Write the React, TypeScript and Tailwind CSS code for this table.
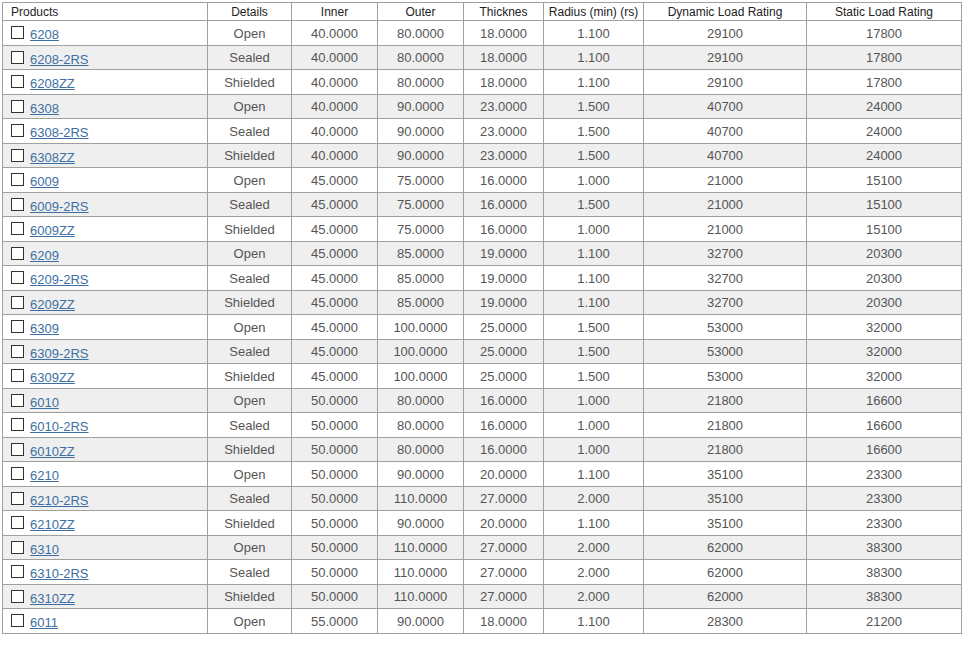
// Bearing spec table: products with checkbox + link, then dimensions and load ratings.

type Row = [string, string, string, string, string, string, string, string];

const rows: Row[] = [
  ["6208", "Open", "40.0000", "80.0000", "18.0000", "1.100", "29100", "17800"],
  ["6208-2RS", "Sealed", "40.0000", "80.0000", "18.0000", "1.100", "29100", "17800"],
  ["6208ZZ", "Shielded", "40.0000", "80.0000", "18.0000", "1.100", "29100", "17800"],
  ["6308", "Open", "40.0000", "90.0000", "23.0000", "1.500", "40700", "24000"],
  ["6308-2RS", "Sealed", "40.0000", "90.0000", "23.0000", "1.500", "40700", "24000"],
  ["6308ZZ", "Shielded", "40.0000", "90.0000", "23.0000", "1.500", "40700", "24000"],
  ["6009", "Open", "45.0000", "75.0000", "16.0000", "1.000", "21000", "15100"],
  ["6009-2RS", "Sealed", "45.0000", "75.0000", "16.0000", "1.500", "21000", "15100"],
  ["6009ZZ", "Shielded", "45.0000", "75.0000", "16.0000", "1.000", "21000", "15100"],
  ["6209", "Open", "45.0000", "85.0000", "19.0000", "1.100", "32700", "20300"],
  ["6209-2RS", "Sealed", "45.0000", "85.0000", "19.0000", "1.100", "32700", "20300"],
  ["6209ZZ", "Shielded", "45.0000", "85.0000", "19.0000", "1.100", "32700", "20300"],
  ["6309", "Open", "45.0000", "100.0000", "25.0000", "1.500", "53000", "32000"],
  ["6309-2RS", "Sealed", "45.0000", "100.0000", "25.0000", "1.500", "53000", "32000"],
  ["6309ZZ", "Shielded", "45.0000", "100.0000", "25.0000", "1.500", "53000", "32000"],
  ["6010", "Open", "50.0000", "80.0000", "16.0000", "1.000", "21800", "16600"],
  ["6010-2RS", "Sealed", "50.0000", "80.0000", "16.0000", "1.000", "21800", "16600"],
  ["6010ZZ", "Shielded", "50.0000", "80.0000", "16.0000", "1.000", "21800", "16600"],
  ["6210", "Open", "50.0000", "90.0000", "20.0000", "1.100", "35100", "23300"],
  ["6210-2RS", "Sealed", "50.0000", "110.0000", "27.0000", "2.000", "35100", "23300"],
  ["6210ZZ", "Shielded", "50.0000", "90.0000", "20.0000", "1.100", "35100", "23300"],
  ["6310", "Open", "50.0000", "110.0000", "27.0000", "2.000", "62000", "38300"],
  ["6310-2RS", "Sealed", "50.0000", "110.0000", "27.0000", "2.000", "62000", "38300"],
  ["6310ZZ", "Shielded", "50.0000", "110.0000", "27.0000", "2.000", "62000", "38300"],
  ["6011", "Open", "55.0000", "90.0000", "18.0000", "1.100", "28300", "21200"],
];

const headers = [
  "Products",
  "Details",
  "Inner",
  "Outer",
  "Thicknes",
  "Radius (min) (rs)",
  "Dynamic Load Rating",
  "Static Load Rating",
];

const widths = ["w-[205px]", "w-[84px]", "w-[86px]", "w-[86px]", "w-[80px]", "w-[100px]", "w-[163px]", "w-[155px]"];

export default function App() {
  return (
    <div className="min-h-[659px] bg-white pl-[2px] pt-[2px] font-['Liberation_Sans',Arial,sans-serif]">
      <table className="w-[960px] table-fixed border-collapse border border-[#a0a0a0]">
        <colgroup>
          {widths.map((w, i) => (
            <col key={i} className={w} />
          ))}
        </colgroup>
        <thead>
          <tr className="h-[18px]">
            {headers.map((h, i) => (
              <th
                key={h}
                className={`border border-[#a0a0a0] p-0 text-[12px] font-normal leading-[14px] text-[#222] ${
                  i === 0 ? "pl-[8px] text-left" : "text-center"
                }`}
              >
                {h}
              </th>
            ))}
          </tr>
        </thead>
        <tbody>
          {rows.map((r, ri) => (
            <tr key={r[0]} className={`${ri % 2 === 0 ? "h-[25px] bg-white" : "h-[24px] bg-[#efefef]"}`}>
              <td className="border border-[#a0a0a0] p-0 pl-[8px] text-[13px] leading-[15px]">
                <div className="flex items-center gap-[6px]">
                  <span className="mb-[1px] inline-block h-[13px] w-[13px] border border-[#333] bg-white" />
                  <a href="#" className="mt-[3px] text-[#3d6fa3] underline">
                    {r[0]}
                  </a>
                </div>
              </td>
              {r.slice(1).map((c, ci) => (
                <td
                  key={ci}
                  className="border border-[#a0a0a0] p-0 text-center text-[13px] leading-[15px] text-[#555]"
                >
                  {c}
                </td>
              ))}
            </tr>
          ))}
        </tbody>
      </table>
    </div>
  );
}
